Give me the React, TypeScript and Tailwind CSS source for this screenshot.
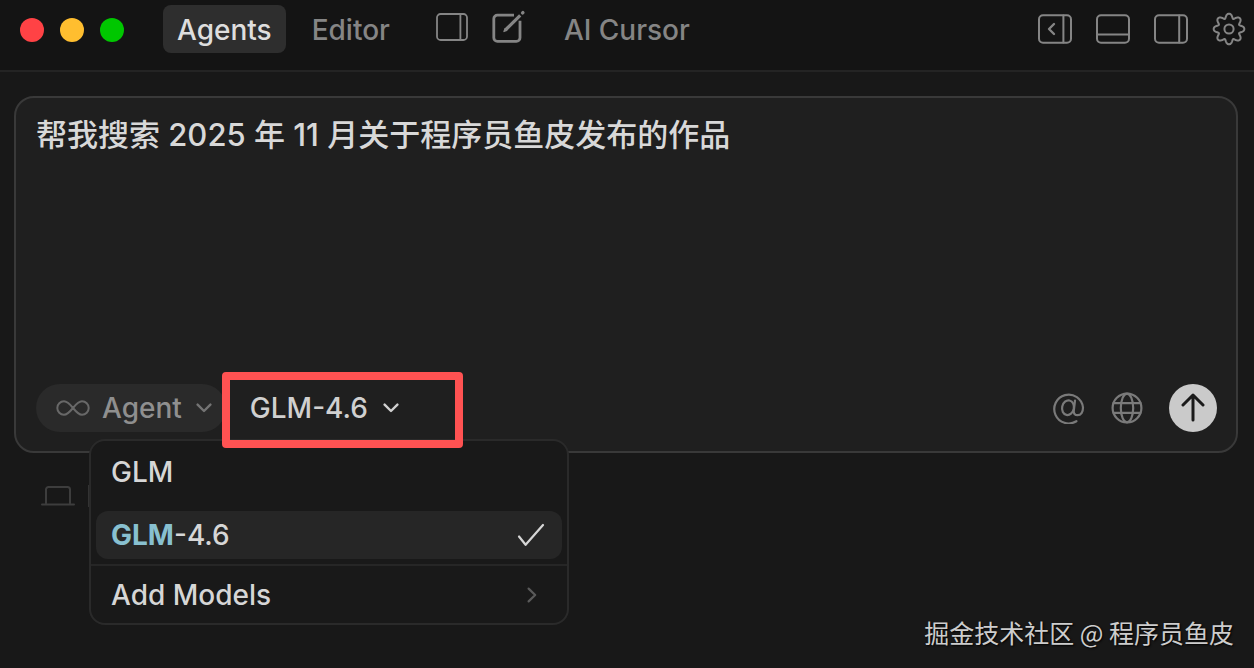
import { useState } from "react";
import type { ReactNode } from "react";

type IconProps = { className?: string };

function Svg({ w, h, sw = 2, className, children }: { w: number; h: number; sw?: number; className?: string; children: ReactNode }) {
  return (
    <svg
      width={w}
      height={h}
      viewBox={`0 0 ${w} ${h}`}
      fill="none"
      stroke="currentColor"
      strokeWidth={sw}
      strokeLinecap="round"
      strokeLinejoin="round"
      aria-hidden="true"
      className={className}
    >
      {children}
    </svg>
  );
}

const LayoutIcon = () => (
  <Svg w={32} h={28} sw={1.8}>
    <rect x="1" y="1" width="30" height="26" rx="3.6" />
    <path d="M24.4 1v26" />
  </Svg>
);

const ComposeIcon = () => (
  <Svg w={34} h={34} sw={2.8}>
    <path d="M22 5.200H5.400a3.600 3.600 0 0 0-3.600 3.600v19a3.600 3.600 0 0 0 3.600 3.600h19a3.600 3.600 0 0 0 3.600-3.600V10.800" strokeLinecap="butt" />
    <path d="M13.400 20 28.200 5.400" strokeWidth="3.200" strokeLinecap="butt" />
    <path d="M12 21.400l1.100-2.600 1.500 1.500z" strokeWidth="1.400" fill="currentColor" />
    <path d="M30.600 2.900l.3-.3" strokeWidth="3.400" />
  </Svg>
);

const CollapseIcon = () => (
  <Svg w={34} h={30}>
    <rect x="1" y="1.2" width="32" height="27.6" rx="4" />
    <path d="M25.4 1.5v27" />
    <path d="M16 10l-5 5 5 5" strokeWidth="2.4" />
  </Svg>
);

const BottomPanelIcon = () => (
  <Svg w={34} h={30}>
    <rect x="1" y="1.2" width="32" height="27.6" rx="4" />
    <path d="M1.5 20.6h31" />
  </Svg>
);

const SidePanelIcon = () => (
  <Svg w={34} h={30}>
    <rect x="1" y="1.2" width="32" height="27.6" rx="4" />
    <path d="M25.2 1.5v27" />
  </Svg>
);

// Outline of an eight-lobed cog, sampled from a cosine-modulated circle.
const gearPoints = Array.from({ length: 160 }, (_, i) => {
  const a = (i / 160) * Math.PI * 2;
  const r = 13.4 + 2.2 * Math.cos(8 * a) - 0.3 * Math.cos(16 * a);
  return `${(17 + r * Math.sin(a)).toFixed(2)},${(17 - r * Math.cos(a)).toFixed(2)}`;
}).join(" ");

const GearIcon = () => (
  <Svg w={34} h={34}>
    <polygon points={gearPoints} />
    <circle cx="17" cy="17" r="4.6" />
  </Svg>
);

const InfinityIcon = () => (
  <Svg w={34} h={16} sw={2}>
    <path d="M17 8C13.6 3.8 11.4 1.3 8 1.3a6.7 6.7 0 0 0 0 13.4C11.4 14.7 13.6 12.2 17 8s5.6-6.7 9-6.7a6.7 6.7 0 0 1 0 13.4C22.6 14.7 20.4 12.2 17 8Z" />
  </Svg>
);

const ChevronDown = ({ className }: IconProps) => (
  <Svg w={16} h={10} sw={2.4} className={className}>
    <path d="M1.6 1.6 8 8l6.4-6.4" />
  </Svg>
);

const ChevronRight = ({ className }: IconProps) => (
  <Svg w={10} h={16} sw={2.2} className={className}>
    <path d="M1.6 1.6 8.2 8l-6.6 6.4" />
  </Svg>
);

const MentionIcon = () => (
  <Svg w={32} h={32} sw={2.2}>
    <path d="M23.400 29.200A14.400 14.400 0 1 1 30 15.500C30 20 28 23.200 24.600 23.200 21.800 23.200 20.500 21.400 20.800 18.600L22 8.600" />
    <ellipse cx="15" cy="15.700" rx="5.900" ry="7.400" transform="rotate(12 15 15.700)" />
  </Svg>
);

const GlobeIcon = () => (
  <Svg w={32} h={32} sw={2.2}>
    <circle cx="16" cy="16" r="14.4" />
    <ellipse cx="16" cy="16" rx="6.2" ry="14.4" />
    <path d="M2.5 11.2h27M2.5 20.800h27" />
  </Svg>
);

const ArrowUpIcon = () => (
  <Svg w={24} h={30} sw={3}>
    <path d="M12 27V2M2 12 12 2l10 10" />
  </Svg>
);

const CheckIcon = () => (
  <Svg w={28} h={24} sw={2.2}>
    <path d="M2 13.5 8.6 21.8 26 2" />
  </Svg>
);

const LaptopIcon = () => (
  <Svg w={34} h={22} sw={2}>
    <path d="M5 18V4.5A2.5 2.5 0 0 1 7.5 2h19A2.5 2.5 0 0 1 29 4.500V18M1 19.500h32" />
  </Svg>
);

function TitleBar() {
  return (
    <header className="flex h-[72px] items-start justify-between border-b-2 border-[#242424] bg-[#141414] pt-[5px] pr-2 pl-5">
      <div className="flex h-12 items-center">
        <div className="flex gap-4 pt-0.5">
          <button type="button" aria-label="Close" className="size-6 rounded-full bg-[#ff4245]" />
          <button type="button" aria-label="Minimize" className="size-6 rounded-full bg-[#ffbe2f]" />
          <button type="button" aria-label="Zoom" className="size-6 rounded-full bg-[#00c700]" />
        </div>
        <nav className="ml-[39px] flex h-12 items-center text-[28px] font-[450] text-[#858585]">
          <button type="button" className="h-12 rounded-lg bg-[#2e2e2e] px-[14px] pt-0.5 text-[#dedede]">
            Agents
          </button>
          <button type="button" className="ml-[26px] h-12 pt-0.5">
            Editor
          </button>
        </nav>
        <div className="ml-[46px] flex items-center gap-6 text-[#858585]">
          <button type="button" aria-label="Toggle layout" className="-mt-1">
            <LayoutIcon />
          </button>
          <button type="button" aria-label="New agent" className="-mt-1">
            <ComposeIcon />
          </button>
        </div>
        <h1 className="ml-[38px] pt-0.5 text-[28px] leading-[46px] font-[450] text-[#858585]">AI Cursor</h1>
      </div>
      <div className="flex h-12 items-center gap-6 text-[#858585]">
        <button type="button" aria-label="Collapse panel">
          <CollapseIcon />
        </button>
        <button type="button" aria-label="Toggle bottom panel">
          <BottomPanelIcon />
        </button>
        <button type="button" aria-label="Toggle side panel">
          <SidePanelIcon />
        </button>
        <button type="button" aria-label="Settings">
          <GearIcon />
        </button>
      </div>
    </header>
  );
}

function ModelMenu({ query, onQuery }: { query: string; onQuery: (v: string) => void }) {
  return (
    <div className="absolute top-[55px] left-[53px] z-10 w-[480px] rounded-2xl border-2 border-[#2a2a2a] bg-[#191919] pt-[7px] pb-1 text-[28px] leading-[48px] font-[450] text-[#d6d6d6]">
      <input
        aria-label="Search models"
        value={query}
        onChange={(e) => onQuery(e.target.value)}
        className="mb-[15px] block h-12 w-full bg-transparent px-5 outline-none"
      />
      <button type="button" className="mx-[5px] flex h-12 w-[466px] items-center justify-between rounded-xl bg-[#262626] pr-[17px] pl-[15px]">
        <span>
          <span className="font-bold text-[#88c0d0]">GLM</span>-4.6
        </span>
        <CheckIcon />
      </button>
      <hr className="my-[5px] border-t-2 border-[#262626]" />
      <button type="button" className="flex h-12 w-full items-center justify-between pr-[30px] pl-5">
        Add Models
        <ChevronRight className="text-[#5a5a5a]" />
      </button>
    </div>
  );
}

function Composer() {
  const [prompt, setPrompt] = useState("帮我搜索 2025 年 11 月关于程序员鱼皮发布的作品");
  const [query, setQuery] = useState("GLM");
  return (
    <section className="flex flex-col rounded-[20px] border-2 border-[#393939] bg-[#1f1f1f] pt-[15px] pr-[19px] pb-[19px] pl-5">
      <textarea
        aria-label="Prompt"
        value={prompt}
        onChange={(e) => setPrompt(e.target.value)}
        className="block h-[271px] w-full resize-none bg-transparent text-[31px] leading-[44px] font-[450] text-[#d8d8d8] outline-none"
      />
      <div className="relative flex h-12 items-center justify-between">
        <div className="flex items-center text-[28px] leading-[48px] font-[450]">
          <button type="button" className="flex h-12 items-center rounded-full bg-[#2a2a2a] pr-[14px] pl-5 text-[#8f8f8f]">
            <span className="text-[#686868]">
              <InfinityIcon />
            </span>
            <span className="ml-3">Agent</span>
            <ChevronDown className="ml-[14px] text-[#747474]" />
          </button>
          <div className="relative ml-6">
            <button type="button" className="flex h-12 items-center gap-[15px] text-[#d0d0d0]">
              GLM-4.6
              <ChevronDown />
            </button>
            <div className="pointer-events-none absolute -top-3 -left-7 z-20 h-[76px] w-[241px] rounded-sm border-8 border-[#ff5252]" />
          </div>
        </div>
        <div className="flex items-center gap-[26px] text-[#7a7a7a]">
          <button type="button" aria-label="Mention">
            <MentionIcon />
          </button>
          <button type="button" aria-label="Search the web">
            <GlobeIcon />
          </button>
          <button type="button" aria-label="Send" className="flex size-12 items-center justify-center rounded-full bg-[#cacaca] text-[#1a1a1a]">
            <ArrowUpIcon />
          </button>
        </div>
        <ModelMenu query={query} onQuery={setQuery} />
      </div>
    </section>
  );
}

export default function App() {
  return (
    <div className="relative min-h-screen bg-[#181818] font-['Inter','Noto_Sans_CJK_SC',sans-serif]">
      <TitleBar />
      <main className="pt-6 pr-4 pl-[14px]">
        <Composer />
        <div className="mt-8 flex items-center gap-[13px] pl-[27px] text-[#3d3d3d]">
          <LaptopIcon />
          <span className="h-[22px] w-0.5 bg-[#333333]" />
        </div>
      </main>
      <footer className="absolute right-5 bottom-[18px] font-['Noto_Sans_CJK_SC',sans-serif] text-[25px] leading-9 text-[#cdcdcd] text-shadow-[1px_1px_2px_#000000]">
        掘金技术社区 @ 程序员鱼皮
      </footer>
    </div>
  );
}
